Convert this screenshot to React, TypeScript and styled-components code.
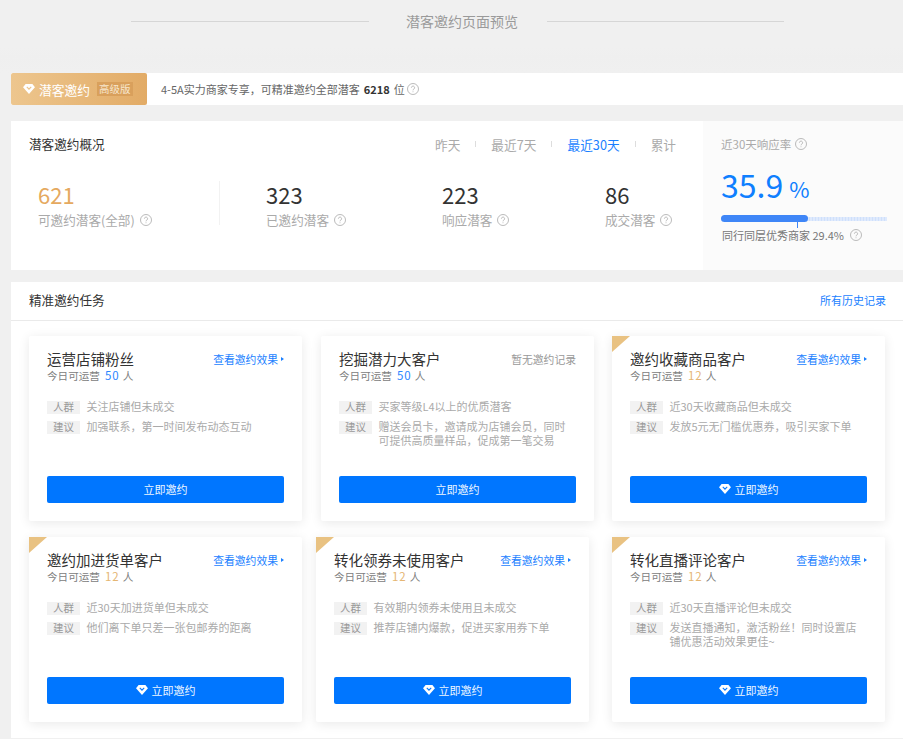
import React from "react";
import styled, { createGlobalStyle } from "styled-components";

const GlobalStyle = createGlobalStyle`
	html, body {
		margin: 0;
		padding: 0;
		background: #f0f0f0;
	}
	body {
		font-family: "Noto Sans CJK SC", "Noto Sans", sans-serif;
	}
	* {
		box-sizing: border-box;
	}
`;

const Page = styled.div`
	width: 903px;
	height: 739px;
	overflow: hidden;
`;

const PreviewHeader = styled.div`
	height: 73px;
	padding: 0 119px 0 131px;
	display: flex;
	align-items: flex-start;
	background: linear-gradient(#f0f0f0, #f0f0f0 48px, #efefef 56px, #f0f0f0);
`;

const HeaderLine = styled.div`
	flex: 1;
	height: 1px;
	margin-top: 21px;
	background: #d6d6d6;
`;

const HeaderTitle = styled.div`
	width: 178px;
	padding-left: 9px;
	text-align: center;
	font-size: 14px;
	line-height: 42px;
	color: #9a9a9a;
`;

const Banner = styled.div`
	height: 32px;
	margin-left: 11px;
	display: flex;
	align-items: center;
	background: #fff;
`;

const Badge = styled.div`
	width: 136px;
	height: 32px;
	padding-left: 12px;
	display: flex;
	align-items: center;
	border-radius: 2px;
	background: linear-gradient(90deg, #edc68e, #e2ab66);
	color: #fff;
	font-size: 12.75px;
`;

const BadgeName = styled.span`
	margin-left: 4px;
`;

const BadgeLevel = styled.span`
	margin-left: 7px;
	padding: 0 2px;
	font-size: 10.5px;
	line-height: 14px;
	color: #f7e6cc;
	background: #d9a05c;
`;

const BannerText = styled.div`
	margin-left: 14px;
	display: flex;
	align-items: center;
	font-size: 11px;
	color: #666;

	b {
		margin: 0 4px;
		color: #333;
	}
`;

const Overview = styled.div`
	height: 149px;
	margin: 16px 0 12px 11px;
	display: flex;
	background: #fff;
`;

const OverviewMain = styled.div`
	width: 692px;
	padding: 13px 27px 0 18px;
`;

const OverviewTop = styled.div`
	display: flex;
	justify-content: space-between;
	align-items: center;
	height: 20px;
`;

const SectionTitle = styled.div`
	padding-bottom: 2px;
	font-size: 12.6px;
	color: #333;
`;

const Ranges = styled.div`
	display: flex;
	align-items: center;
	font-size: 12.7px;
`;

const Range = styled.span<{ $active?: boolean }>`
	color: ${p => (p.$active ? "#1a7fff" : "#aaa")};
`;

const RangeDivider = styled.i`
	width: 1px;
	height: 6px;
	margin: 0 15px;
	background: #ddd;
`;

const Stats = styled.div`
	margin-top: 27px;
	display: flex;
`;

const Stat = styled.div<{ $width: number; $pad?: number; $divider?: boolean }>`
	flex: none;
	width: ${p => p.$width}px;
	height: 44px;
	padding-left: ${p => p.$pad ?? 0}px;
	border-right: ${p => (p.$divider ? "1px solid #f2f2f2" : "none")};
`;

const StatValue = styled.div<{ $gold?: boolean }>`
	margin-bottom: 3px;
	font-size: 22px;
	line-height: 26px;
	color: ${p => (p.$gold ? "#e5a95f" : "#333")};
`;

const StatLabel = styled.div`
	display: flex;
	align-items: center;
	gap: 5px;
	font-size: 12.6px;
	line-height: 20px;
	white-space: nowrap;
	color: #aaa;
`;

const RatePanel = styled.div`
	flex: 1;
	padding: 13px 16px 0 18px;
	background: #fbfbfb;
`;

const RateTitle = styled.div`
	display: flex;
	align-items: center;
	gap: 4px;
	height: 20px;
	font-size: 11.5px;
	color: #aaa;
`;

const RateValue = styled.div`
	margin-top: 10px;
	font-size: 32px;
	line-height: 40px;
	color: #0f7fff;

	small {
		margin-left: 6px;
		font-size: 22px;
	}
`;

const RateTrack = styled.div`
	position: relative;
	height: 7px;
	margin-top: 7px;
	width: 166px;
	background: linear-gradient(90deg, #cfe0fb 0 2px, #eef4fe 2px 3px) center / 3px 4px repeat-x;
`;

const RateFill = styled.div`
	height: 7px;
	border-radius: 4px;
	background: #3f86f7;
`;

const RateMark = styled.div`
	position: absolute;
	top: 0;
	width: 1px;
	height: 13px;
	background: #3f86f7;
`;

const RateNote = styled.div`
	display: flex;
	align-items: center;
	gap: 6px;
	margin-top: 5px;
	padding-left: 1px;
	font-size: 11px;
	line-height: 16px;
	white-space: nowrap;
	color: #777;
`;

const TaskPanel = styled.div`
	height: 456px;
	margin-left: 11px;
	background: #fff;
`;

const TaskHeader = styled.div`
	height: 39px;
	padding: 0 17px 2px 18px;
	display: flex;
	justify-content: space-between;
	align-items: center;
	border-bottom: 1px solid #eaeaea;
`;

const HistoryLink = styled.span`
	font-size: 11px;
	color: #1a7fff;
`;

const CardRow = styled.div<{ $top: number }>`
	display: flex;
	padding: ${p => p.$top}px 0 0 18px;
`;

const Card = styled.div<{ $gap: number }>`
	position: relative;
	flex: none;
	width: 273px;
	height: 185px;
	margin-left: ${p => p.$gap}px;
	padding: 14px 18px 0;
	display: flex;
	flex-direction: column;
	border-radius: 2px;
	background: #fff;
	box-shadow: 0 2px 12px rgba(0, 0, 0, 0.09);
`;

const Corner = styled.div`
	position: absolute;
	left: 0;
	top: 0;
	width: 18px;
	height: 16px;
	background: #e9c282;
	clip-path: polygon(0 0, 100% 0, 0 100%);
`;

const CardTop = styled.div`
	display: flex;
	justify-content: space-between;
	align-items: center;
	height: 18px;
`;

const CardTitle = styled.div`
	padding-bottom: 2px;
	font-size: 14.5px;
	color: #333;
`;

const EffectLink = styled.span`
	display: flex;
	align-items: center;
	gap: 3px;
	font-size: 10.8px;
	color: #1a7fff;

	i {
		width: 0;
		height: 0;
		border-left: 3px solid #1a7fff;
		border-top: 2.5px solid transparent;
		border-bottom: 2.5px solid transparent;
	}
`;

const NoRecord = styled.span`
	font-size: 10.8px;
	color: #999;
`;

const TodayLine = styled.div`
	margin-top: -1px;
	font-size: 10.6px;
	line-height: 16px;
	color: #808080;
`;

const TodayCount = styled.span<{ $gold?: boolean }>`
	margin: 0 3px 0 5px;
	font-size: 11.5px;
	letter-spacing: 1px;
	color: ${p => (p.$gold ? "#e5b673" : "#2c86ff")};
`;

const InfoList = styled.div`
	margin-top: 17px;
	display: flex;
	flex-direction: column;
	gap: 7px;
`;

const InfoRow = styled.div`
	display: flex;
	align-items: flex-start;
	gap: 6.5px;
`;

const InfoTag = styled.span`
	flex: none;
	width: 33px;
	height: 13px;
	text-align: center;
	font-size: 10.5px;
	line-height: 12px;
	color: #999;
	background: #f2f2f2;
`;

const InfoText = styled.span`
	margin-top: -2px;
	font-size: 11px;
	line-height: 14px;
	white-space: nowrap;
	color: #aaa;
`;

const InviteButton = styled.div`
	position: absolute;
	left: 18px;
	right: 18px;
	bottom: 18px;
	height: 27px;
	padding-bottom: 1px;
	display: flex;
	justify-content: center;
	align-items: center;
	gap: 4px;
	border-radius: 2px;
	background: #0076ff;
	color: #eef6ff;
	font-size: 11px;
`;

const Help = ({ size = 12 }: { size?: number }) => (
	<svg width={size} height={size} viewBox="0 0 12 12" fill="none" stroke="#aaa" strokeWidth="0.8">
		<circle cx="6" cy="6" r="5.5" />
		<path d="M4.4 4.7a1.6 1.6 0 1 1 2.5 1.3c-.6.4-.9.7-.9 1.3" />
		<path d="M6 8.4v.8" />
	</svg>
);

const Diamond = ({ size = 12 }: { size?: number }) => (
	<svg width={size} height={size * 0.83} viewBox="0 0 12 10">
		<path
			fill="#fff"
			fillRule="evenodd"
			d="M2.6 0h6.8L12 3.2 6 10 0 3.2zM3.4 3.2 6 6l2.6-2.8-.7-.7L6 4.3 4.1 2.5z"
		/>
	</svg>
);

interface Task {
	title: string;
	count: number;
	crowd: string;
	advice: React.ReactNode;
	gap: number;
	premium?: boolean;
	noRecord?: boolean;
}

const firstRow: Task[] = [
	{ title: "运营店铺粉丝", count: 50, crowd: "关注店铺但未成交", advice: "加强联系，第一时间发布动态互动", gap: 0 },
	{
		title: "挖掘潜力大客户",
		count: 50,
		crowd: "买家等级L4以上的优质潜客",
		advice: (
			<>
				赠送会员卡，邀请成为店铺会员，同时
				<br />
				可提供高质量样品，促成第一笔交易
			</>
		),
		gap: 19,
		noRecord: true,
	},
	{ title: "邀约收藏商品客户", count: 12, crowd: "近30天收藏商品但未成交", advice: "发放5元无门槛优惠券，吸引买家下单", gap: 18, premium: true },
];

const secondRow: Task[] = [
	{ title: "邀约加进货单客户", count: 12, crowd: "近30天加进货单但未成交", advice: "他们离下单只差一张包邮券的距离", gap: 0, premium: true },
	{ title: "转化领券未使用客户", count: 12, crowd: "有效期内领券未使用且未成交", advice: "推荐店铺内爆款，促进买家用券下单", gap: 14, premium: true },
	{
		title: "转化直播评论客户",
		count: 12,
		crowd: "近30天直播评论但未成交",
		advice: (
			<>
				发送直播通知，激活粉丝！同时设置店
				<br />
				铺优惠活动效果更佳~
			</>
		),
		gap: 23,
		premium: true,
	},
];

const stats = [
	{ value: "621", label: "可邀约潜客(全部)", width: 191, pad: 9, gold: true, divider: true },
	{ value: "323", label: "已邀约潜客", width: 222, pad: 46 },
	{ value: "223", label: "响应潜客", width: 163 },
	{ value: "86", label: "成交潜客", width: 71 },
];

const TaskCard = ({ task }: { task: Task }) => (
	<Card $gap={task.gap}>
		{task.premium && <Corner />}
		<CardTop>
			<CardTitle>{task.title}</CardTitle>
			{task.noRecord ? (
				<NoRecord>暂无邀约记录</NoRecord>
			) : (
				<EffectLink>
					查看邀约效果
					<i />
				</EffectLink>
			)}
		</CardTop>
		<TodayLine>
			今日可运营
			<TodayCount $gold={task.premium}>{task.count}</TodayCount>人
		</TodayLine>
		<InfoList>
			<InfoRow>
				<InfoTag>人群</InfoTag>
				<InfoText>{task.crowd}</InfoText>
			</InfoRow>
			<InfoRow>
				<InfoTag>建议</InfoTag>
				<InfoText>{task.advice}</InfoText>
			</InfoRow>
		</InfoList>
		<InviteButton>
			{task.premium && <Diamond />}
			立即邀约
		</InviteButton>
	</Card>
);

const App = () => (
	<Page>
		<GlobalStyle />
		<PreviewHeader>
			<HeaderLine />
			<HeaderTitle>潜客邀约页面预览</HeaderTitle>
			<HeaderLine />
		</PreviewHeader>
		<Banner>
			<Badge>
				<Diamond />
				<BadgeName>潜客邀约</BadgeName>
				<BadgeLevel>高级版</BadgeLevel>
			</Badge>
			<BannerText>
				4-5A实力商家专享，可精准邀约全部潜客<b>6218</b>位&nbsp;
				<Help />
			</BannerText>
		</Banner>
		<Overview>
			<OverviewMain>
				<OverviewTop>
					<SectionTitle>潜客邀约概况</SectionTitle>
					<Ranges>
						<Range>昨天</Range>
						<RangeDivider />
						<Range>最近7天</Range>
						<RangeDivider />
						<Range $active>最近30天</Range>
						<RangeDivider />
						<Range>累计</Range>
					</Ranges>
				</OverviewTop>
				<Stats>
					{stats.map(s => (
						<Stat key={s.label} $width={s.width} $pad={s.pad} $divider={s.divider}>
							<StatValue $gold={s.gold}>{s.value}</StatValue>
							<StatLabel>
								{s.label}
								<Help />
							</StatLabel>
						</Stat>
					))}
				</Stats>
			</OverviewMain>
			<RatePanel>
				<RateTitle>
					近30天响应率
					<Help />
				</RateTitle>
				<RateValue>
					35.9<small>%</small>
				</RateValue>
				<RateTrack>
					<RateFill style={{ width: `${(87 / 166) * 100}%` }} />
					<RateMark style={{ left: `${(76 / 166) * 100}%` }} />
				</RateTrack>
				<RateNote>
					同行同层优秀商家 29.4%
					<Help />
				</RateNote>
			</RatePanel>
		</Overview>
		<TaskPanel>
			<TaskHeader>
				<SectionTitle>精准邀约任务</SectionTitle>
				<HistoryLink>所有历史记录</HistoryLink>
			</TaskHeader>
			<CardRow $top={15}>
				{firstRow.map(t => (
					<TaskCard key={t.title} task={t} />
				))}
			</CardRow>
			<CardRow $top={16}>
				{secondRow.map(t => (
					<TaskCard key={t.title} task={t} />
				))}
			</CardRow>
		</TaskPanel>
	</Page>
);

export default App;
